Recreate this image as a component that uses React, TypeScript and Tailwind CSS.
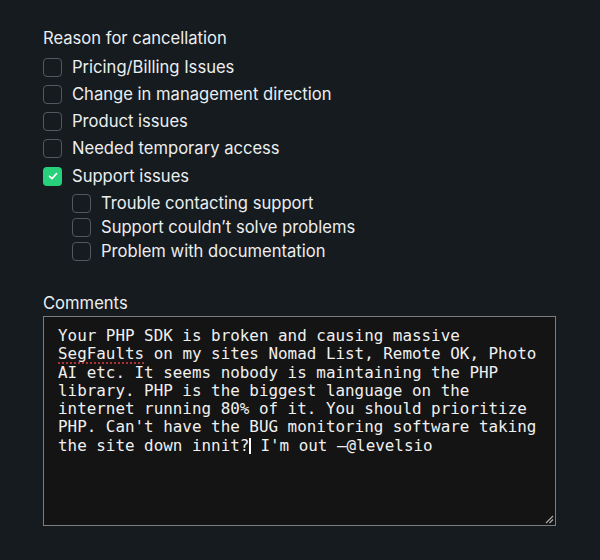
import React from "react";

const Box = ({ checked }: { checked?: boolean }) =>
  checked ? (
    <span className="flex h-[19px] w-[19px] shrink-0 items-center justify-center rounded-[4px] bg-[#27d07a]">
      <svg width="12" height="12" viewBox="0 0 12 12" fill="none">
        <path d="M2.5 6.3 L5 8.6 L9.5 3.6" stroke="white" strokeWidth="1.6" strokeLinecap="round" strokeLinejoin="round" />
      </svg>
    </span>
  ) : (
    <span className="block h-[19px] w-[19px] shrink-0 rounded-[4px] border-[1.5px] border-[#52585d]" />
  );

const Row = ({ label, checked }: { label: string; checked?: boolean }) => (
  <div className="flex h-[24px] items-center gap-[10px]">
    <Box checked={checked} />
    <span>{label}</span>
  </div>
);

export default function App() {
  return (
    <div
      className="h-[560px] w-[600px] bg-[#151b1f] pl-[43px] pr-[44px] pt-[26px] text-[16.6px] text-[#eceef0]"
      style={{ fontFamily: "Inter, 'Noto Sans', sans-serif" }}
    >
      <div className="flex h-[24px] items-center">Reason for cancellation</div>
      <div className="mt-[5px] flex flex-col gap-[3.25px]">
        <Row label="Pricing/Billing Issues" />
        <Row label="Change in management direction" />
        <Row label="Product issues" />
        <Row label="Needed temporary access" />
        <Row label="Support issues" checked />
      </div>
      <div className="mt-[3px] flex flex-col pl-[29px]">
        <Row label="Trouble contacting support" />
        <Row label="Support couldn’t solve problems" />
        <Row label="Problem with documentation" />
      </div>
      <div className="mt-[28px] flex h-[24px] items-center">Comments</div>
      <div className="relative mt-[1px] h-[210px] w-[513px] border-[1.5px] border-[#7a7e82] bg-[#141414] px-[14px] pt-[10px]">
        <div
          className="whitespace-pre-wrap text-[15.9px] leading-[18.3px] text-[#f0f0f0]"
          style={{ fontFamily: "'DejaVu Sans Mono', monospace" }}
        >
          Your PHP SDK is broken and causing massive{"\n"}
          <span className="underline decoration-dotted decoration-[#d23b3b] underline-offset-[3px]">SegFaults</span> on my sites Nomad List, Remote OK, Photo{"\n"}
          AI etc. It seems nobody is maintaining the PHP{"\n"}
          library. PHP is the biggest language on the{"\n"}
          internet running 80% of it. You should prioritize{"\n"}
          PHP. Can't have the BUG monitoring software taking{"\n"}
          the site down innit?<span className="inline-block h-[16px] w-[1.5px] align-[-3px] bg-white" /> I'm out —@levelsio
        </div>
        <svg className="absolute bottom-[1px] right-[1px]" width="10" height="10" viewBox="0 0 10 10">
          <path d="M2 9 L9 2 M5.5 9 L9 5.5" stroke="#aaa" strokeWidth="1.2" />
        </svg>
      </div>
    </div>
  );
}
